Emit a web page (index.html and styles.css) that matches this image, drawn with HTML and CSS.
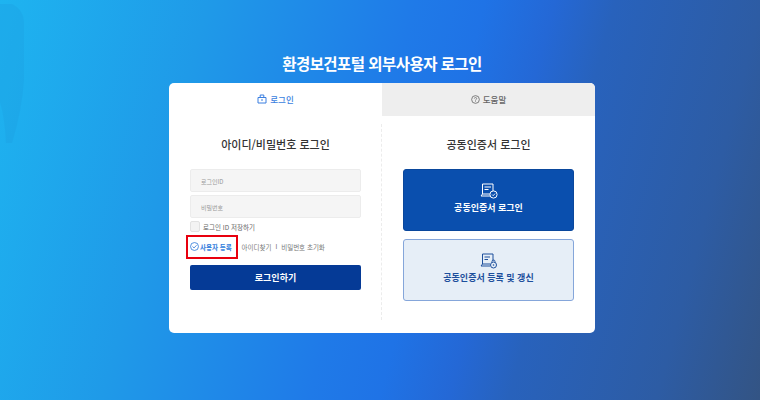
FILE: index.html
```html
<!DOCTYPE html>
<html lang="ko">
<head>
<meta charset="utf-8">
<title>환경보건포털 외부사용자 로그인</title>
<link rel="stylesheet" href="styles.css">
</head>
<body>
<svg class="bg-shape" width="26" height="146" viewBox="0 0 26 146" aria-hidden="true"><path d="M0 4H12Q24 10 24 24V80Q22 110 12 143H6Q5 118 0 102Z"/></svg>
<main class="wrap">
  <h1 class="page-title">환경보건포털 외부사용자 로그인</h1>
  <section class="card">
    <div class="tabs">
      <div class="tab tab-active">
        <svg class="tab-icon" width="10" height="10" viewBox="0 0 10 10" aria-hidden="true"><path d="M1 3.5H9V9H1ZM3.2 3.5V1H6.8V3.5" fill="none" stroke="#3b7fe0" stroke-width="1"/><path d="M4 6H6" stroke="#3b7fe0" stroke-width="1.2"/></svg>
        <span>로그인</span>
      </div>
      <div class="tab tab-idle">
        <svg class="tab-icon" width="9" height="9" viewBox="0 0 10 10" aria-hidden="true"><circle cx="5" cy="5" r="4.3" fill="none" stroke="#666" stroke-width=".9"/><path d="M3.7 4Q3.7 2.8 5 2.8T6.3 4Q6.3 4.8 5 5.5V6.2M5 7V7.8" fill="none" stroke="#666" stroke-width=".8"/></svg>
        <span>도움말</span>
      </div>
    </div>
    <div class="panels">
      <div class="panel panel-left">
        <h2 class="panel-title">아이디/비밀번호 로그인</h2>
        <div class="field">로그인ID</div>
        <div class="field">비밀번호</div>
        <label class="save"><span class="check"></span><span>로그인 ID 저장하기</span></label>
        <div class="links">
          <a class="link link-primary">
            <svg width="9" height="9" viewBox="0 0 10 10" aria-hidden="true"><circle cx="5" cy="5" r="4.4" fill="none" stroke="#2b78d8" stroke-width=".9"/><path d="M2.8 5L4.5 6.6L7.3 3.6" fill="none" stroke="#2b78d8" stroke-width=".9"/></svg>
            <span>사용자 등록</span>
            <span class="highlight"></span>
          </a>
          <span class="sep">I</span>
          <a class="link">아이디찾기</a>
          <span class="sep">I</span>
          <a class="link">비밀번호 초기화</a>
        </div>
        <button class="login-btn" type="button">로그인하기</button>
      </div>
      <div class="panel panel-right">
        <h2 class="panel-title">공동인증서 로그인</h2>
        <button class="cert cert-primary" type="button">
          <svg width="18" height="16" viewBox="0 0 18 16" aria-hidden="true"><path d="M2.5 1H13V9M2.5 1V11M1 13H10M1 13L2.5 11H10" fill="none" stroke="#fff" stroke-width="1"/><path d="M4.5 4H11M4.5 6.5H8.5" stroke="#fff" stroke-width="1"/><circle cx="13.5" cy="11.5" r="3.6" fill="#0a4fae" stroke="#fff" stroke-width="1"/><path d="M12 11.5L13.2 12.7L15 10.6" fill="none" stroke="#fff" stroke-width=".9"/></svg>
          <span>공동인증서 로그인</span>
        </button>
        <button class="cert cert-light" type="button">
          <svg width="18" height="16" viewBox="0 0 18 16" aria-hidden="true"><path d="M2.5 1H13V8M2.5 1V11M1 13H10M1 13L2.5 11H10" fill="none" stroke="#1d4f9c" stroke-width="1"/><path d="M4.5 4H10M4.5 6.5H8" stroke="#1d4f9c" stroke-width="1"/><path d="M12 9.5V8.5Q12 7 13.5 7T15 8.5V9.5" fill="none" stroke="#1d4f9c" stroke-width=".9"/><circle cx="13.5" cy="12" r="3" fill="#e6eef7" stroke="#1d4f9c" stroke-width="1"/><circle cx="13.5" cy="12" r=".8" fill="#1d4f9c"/></svg>
          <span>공동인증서 등록 및 갱신</span>
        </button>
      </div>
    </div>
  </section>
</main>
</body>
</html>
```
FILE: styles.css
```css
* { box-sizing: border-box; }
html, body { height: 100%; }
body {
  margin: 0;
  height: 400px;
  overflow: hidden;
  position: relative;
  font-family: "Noto Sans CJK KR", "Noto Sans", sans-serif;
  background: linear-gradient(105deg, #1eb4f0 0%, #1f9ae8 24%, #1f7ae8 48%, #1f73e6 56%, #2468d6 64%, #2862bc 71%, #2d5ca4 88%, #335484 100%);
}
.bg-shape { position: absolute; left: 0; top: 0; fill: #1d9fe2; opacity: .35; }
.wrap {
  position: relative;
  width: 426px;
  margin-left: 169px;
  padding-top: 52px;
}
.page-title {
  margin: 0 0 8px;
  height: 23px;
  line-height: 23px;
  font-size: 15.5px;
  font-weight: 700;
  color: #fff;
  text-align: center;
  letter-spacing: -.55px;
}
.card {
  height: 250px;
  background: #fff;
  border-radius: 5px;
  overflow: hidden;
}
.tabs { display: flex; height: 33px; }
.tab {
  flex: 1;
  display: flex;
  align-items: center;
  justify-content: center;
  gap: 3px;
  padding-bottom: 1px;
  font-size: 8.5px;
  font-weight: 500;
}
.tab-active { color: #3b7fe0; }
.tab-idle { background: #eee; color: #666; }
.panels { display: flex; height: 217px; padding-top: 8px; }
.panel { flex: 1 1 0; padding: 0 21px; }
.panel-left { border-right: 1px dashed #ececec; height: 196px; padding-right: 20px; }
.panel-title {
  margin: 8px 0 13px;
  height: 24px;
  line-height: 24px;
  font-size: 11px;
  font-weight: 500;
  color: #333;
  text-align: center;
}
.field {
  height: 23px;
  margin-bottom: 3px;
  padding-left: 10px;
  line-height: 23px;
  font-size: 6px;
  color: #999;
  background: #f5f5f5;
  border: 1px solid #ececec;
  border-radius: 2px;
}
.save {
  display: flex;
  align-items: center;
  gap: 3px;
  height: 11px;
  margin-top: 3px;
  font-size: 6.5px;
  color: #666;
}
.check {
  width: 10px;
  height: 11px;
  background: #f3f3f3;
  border: 1px solid #e2e2e2;
  border-radius: 2px;
}
.links {
  display: flex;
  align-items: center;
  height: 23px;
  margin-top: 3px;
  font-size: 6.5px;
  color: #777;
}
.link { display: inline-flex; align-items: center; gap: 1px; position: relative; white-space: nowrap; }
.link-primary { color: #2f7cdc; font-weight: 700; }
.sep { margin: 0 4px; font-size: 6px; color: #666; }
.highlight {
  position: absolute;
  left: -4px;
  top: -7px;
  width: 52px;
  height: 24px;
  border: 2px solid #e8000e;
}
.login-btn {
  display: block;
  width: 100%;
  height: 25px;
  margin-top: 7px;
  border: 0;
  border-radius: 2px;
  background: #053a96;
  color: #fff;
  font: 700 9px "Noto Sans CJK KR", sans-serif;
}
.cert {
  display: flex;
  flex-direction: column;
  align-items: center;
  justify-content: center;
  gap: 2px;
  width: 100%;
  padding: 0 0 3px;
  border-radius: 3px;
  font: 700 9px "Noto Sans CJK KR", sans-serif;
}
.cert-primary {
  height: 62px;
  background: #0a4fae;
  border: 1px solid #0a479c;
  color: #fff;
}
.cert-light {
  height: 62px;
  margin-top: 8px;
  background: #e6eef7;
  border: 1px solid #85a6da;
  color: #1d4f9c;
}
```
